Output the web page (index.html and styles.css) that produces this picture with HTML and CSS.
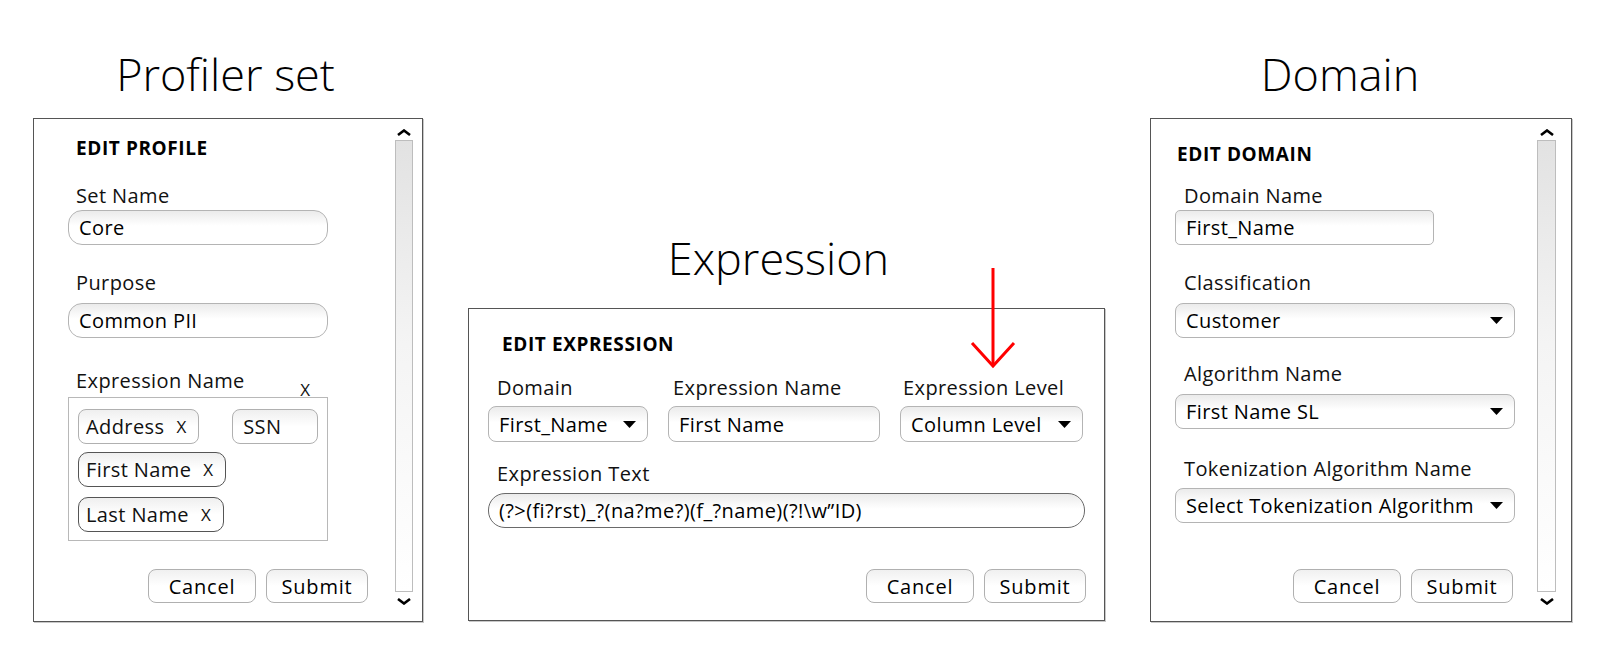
FILE: index.html
```html
<!DOCTYPE html>
<html lang="en">
<head>
<meta charset="utf-8">
<title>Edit forms</title>
<link rel="stylesheet" href="styles.css">
</head>
<body>
<main class="page">

  <section class="col col-profile">
    <h1 class="title title-profile">Profiler set</h1>
    <div class="panel panel-profile">
      <div class="panel-content">
        <h2 class="heading">EDIT PROFILE</h2>
        <div class="label p-setname">Set Name</div>
        <div class="input input-pill p-setname-in">Core</div>
        <div class="label p-purpose">Purpose</div>
        <div class="input input-pill p-purpose-in">Common PII</div>
        <div class="label-row p-exprname">
          <span class="label">Expression Name</span>
          <span class="label-x">X</span>
        </div>
        <div class="chip-box">
          <div class="chip-row">
            <span class="chip">Address <span class="chip-x">X</span></span>
            <span class="chip chip-input">SSN</span>
          </div>
          <div class="chip-row chip-row-2">
            <span class="chip chip-dark">First Name <span class="chip-x">X</span></span>
          </div>
          <div class="chip-row chip-row-3">
            <span class="chip chip-dark">Last Name <span class="chip-x">X</span></span>
          </div>
        </div>
        <div class="actions p-actions">
          <button class="btn btn-cancel">Cancel</button>
          <button class="btn btn-submit">Submit</button>
        </div>
      </div>
      <div class="scrollbar">
        <svg class="scroll-arrow" viewBox="0 0 16 7"><path d="M2 6 L8 1.5 L14 6" /></svg>
        <div class="scroll-track"></div>
        <svg class="scroll-arrow" viewBox="0 0 16 7"><path d="M2 1 L8 5.5 L14 1" /></svg>
      </div>
    </div>
  </section>

  <section class="col col-expr">
    <h1 class="title title-expr">Expression</h1>
    <svg class="red-arrow" width="46" height="104" viewBox="0 0 46 104">
      <path d="M23 2 L23 100" />
      <path d="M2 77 L23 100 L44 77" />
    </svg>
    <div class="panel panel-expr">
      <div class="panel-content">
        <h2 class="heading">EDIT EXPRESSION</h2>
        <div class="expr-grid">
          <div class="cell cell-domain">
            <div class="label">Domain</div>
            <div class="input select input-soft">First_Name
              <svg class="caret" viewBox="0 0 13 7"><path d="M0 0 H13 L6.5 7 Z"/></svg>
            </div>
          </div>
          <div class="cell cell-name">
            <div class="label">Expression Name</div>
            <div class="input input-soft">First Name</div>
          </div>
          <div class="cell cell-level">
            <div class="label">Expression Level</div>
            <div class="input select input-soft">Column Level
              <svg class="caret" viewBox="0 0 13 7"><path d="M0 0 H13 L6.5 7 Z"/></svg>
            </div>
          </div>
        </div>
        <div class="label e-text">Expression Text</div>
        <div class="input input-expr">(?&gt;(fi?rst)_?(na?me?)(f_?name)(?!\w”ID)</div>
        <div class="actions e-actions">
          <button class="btn btn-cancel">Cancel</button>
          <button class="btn btn-submit">Submit</button>
        </div>
      </div>
    </div>
  </section>

  <section class="col col-domain">
    <h1 class="title title-domain">Domain</h1>
    <div class="panel panel-domain">
      <div class="panel-content">
        <h2 class="heading">EDIT DOMAIN</h2>
        <div class="label d-name">Domain Name</div>
        <div class="input input-square d-name-in">First_Name</div>
        <div class="label d-class">Classification</div>
        <div class="input select input-soft d-class-in">Customer
          <svg class="caret" viewBox="0 0 13 7"><path d="M0 0 H13 L6.5 7 Z"/></svg>
        </div>
        <div class="label d-algo">Algorithm Name</div>
        <div class="input select input-soft d-algo-in">First Name SL
          <svg class="caret" viewBox="0 0 13 7"><path d="M0 0 H13 L6.5 7 Z"/></svg>
        </div>
        <div class="label d-token">Tokenization Algorithm Name</div>
        <div class="input select input-soft d-token-in">Select Tokenization Algorithm
          <svg class="caret" viewBox="0 0 13 7"><path d="M0 0 H13 L6.5 7 Z"/></svg>
        </div>
        <div class="actions d-actions">
          <button class="btn btn-cancel">Cancel</button>
          <button class="btn btn-submit">Submit</button>
        </div>
      </div>
      <div class="scrollbar scrollbar-domain">
        <svg class="scroll-arrow" viewBox="0 0 16 7"><path d="M2 6 L8 1.5 L14 6" /></svg>
        <div class="scroll-track"></div>
        <svg class="scroll-arrow" viewBox="0 0 16 7"><path d="M2 1 L8 5.5 L14 1" /></svg>
      </div>
    </div>
  </section>

</main>
</body>
</html>
```

FILE: styles.css
```css
* { box-sizing: border-box; }

html, body {
  margin: 0;
  background: #fff;
}

body {
  width: 1613px;
  height: 655px;
  overflow: hidden;
  font-family: "Open Sans", "Liberation Sans", sans-serif;
  color: #111;
}

.page {
  display: flex;
  align-items: flex-start;
  gap: 45px;
  padding-left: 33px;
}

.col {
  position: relative;
  display: flex;
  flex-direction: column;
}

.col-profile { width: 390px; padding-top: 52px; }
.col-expr { width: 637px; padding-top: 236px; }
.col-domain { width: 422px; padding-top: 52px; }

/* ---------- titles ---------- */
.title {
  margin: 0 0 22px;
  height: 44px;
  font-size: 45px;
  line-height: 44px;
  font-weight: 300;
  text-align: center;
  color: #000;
}
.title-profile { padding-right: 5px; }
.title-expr { padding-right: 16px; margin-bottom: 28px; }
.title-domain { padding-right: 42px; }

.red-arrow {
  position: absolute;
  left: 502px;
  top: 266px;
  fill: none;
  stroke: #ff0000;
  stroke-width: 3;
}

/* ---------- panels ---------- */
.panel {
  display: flex;
  border: 1px solid #555;
  box-shadow: 1px 1px 0 #c8c8c8;
  background: #fff;
}
.panel-profile { height: 504px; }
.panel-expr { height: 313px; }
.panel-domain { height: 504px; }

.panel-content {
  flex: 1;
  display: flex;
  flex-direction: column;
  align-items: flex-start;
}
.panel-profile .panel-content { padding: 19px 27px 0 34px; }
.panel-expr .panel-content { padding: 25px 18px 0 19px; }
.panel-domain .panel-content { padding: 25px 22px 0 24px; }

.heading {
  margin: 0;
  font-size: 19px;
  line-height: 20px;
  font-weight: 700;
  letter-spacing: 0.6px;
  color: #000;
}
.panel-profile .heading { padding-left: 8px; }
.panel-expr .heading { padding-left: 14px; }
.panel-domain .heading { padding-left: 2px; }

.label {
  font-size: 20px;
  line-height: 20px;
  letter-spacing: 0.4px;
  white-space: nowrap;
}
.panel-profile .label { padding-left: 8px; }
.panel-domain .label { padding-left: 9px; }

/* ---------- fields ---------- */
.input {
  display: flex;
  align-items: center;
  height: 35px;
  padding: 0 10px;
  font-size: 20px;
  letter-spacing: 0.4px;
  white-space: nowrap;
  border: 1px solid #b4b4b4;
  background: linear-gradient(#ebebeb, #fff 45%);
  color: #000;
}
.input-pill { width: 260px; border-radius: 14px; }
.input-square { width: 259px; border-radius: 5px; }
.input-soft { border-radius: 8px; }
.input-expr {
  width: 597px;
  margin-top: 9px;
  border-radius: 17px;
  border-color: #6a6a6a;
}

.select {
  justify-content: space-between;
  padding-right: 11px;
}
.caret {
  width: 13px;
  height: 7px;
  flex: none;
  fill: #000;
}

/* profile spacing */
.p-setname { margin-top: 28px; }
.p-setname-in { margin-top: 4px; }
.p-purpose { margin-top: 28px; }
.p-purpose-in { margin-top: 10px; }
.p-exprname { margin-top: 33px; }

.label-row {
  display: flex;
  align-items: flex-start;
  justify-content: space-between;
  width: 260px;
  height: 20px;
}
.label-x {
  font-size: 17px;
  line-height: 20px;
  margin: 9px 18px -9px 0;
}

.chip-box {
  width: 260px;
  height: 144px;
  margin-top: 6px;
  padding: 11px 0 0 9px;
  border: 1px solid #b8b8b8;
}
.chip-row { display: flex; gap: 33px; }
.chip-row-2 { margin-top: 8px; }
.chip-row-3 { margin-top: 10px; }

.chip {
  display: inline-flex;
  align-items: center;
  gap: 12px;
  height: 35px;
  padding: 0 12px 0 7px;
  font-size: 20px;
  letter-spacing: 0.4px;
  white-space: nowrap;
  border: 1px solid #b0b0b0;
  border-radius: 8px;
  background: linear-gradient(#efefef, #fff 50%);
}
.chip-dark { border-color: #555; border-radius: 10px; }
.chip-input { width: 86px; padding-left: 10px; }
.chip-x { font-size: 17px; letter-spacing: 0; }

/* expression spacing */
.expr-grid {
  display: grid;
  grid-template-columns: 160px 212px 183px;
  column-gap: 20px;
  margin-top: 24px;
}
.expr-grid .label { padding-left: 9px; }
.expr-grid .cell-name .label { padding-left: 5px; }
.expr-grid .cell-level .label { padding-left: 3px; }
.expr-grid .input { height: 36px; margin-top: 8px; }
.e-text { margin-top: 22px; padding-left: 9px; }

/* domain spacing */
.d-name { margin-top: 22px; }
.d-name-in { margin-top: 4px; }
.d-class { margin-top: 28px; }
.d-class-in { margin-top: 10px; }
.d-algo { margin-top: 26px; }
.d-algo-in { margin-top: 10px; }
.d-token { margin-top: 30px; }
.d-token-in { margin-top: 9px; }
.d-class-in, .d-algo-in, .d-token-in { width: 100%; }

/* ---------- buttons ---------- */
.actions {
  display: flex;
  gap: 10px;
  align-self: stretch;
  justify-content: flex-end;
}
.p-actions { margin-top: 28px; }
.e-actions { margin-top: 41px; }
.d-actions { margin-top: 46px; padding-right: 2px; }

.btn {
  height: 34px;
  padding: 0;
  font-family: inherit;
  font-size: 20px;
  letter-spacing: 0.8px;
  color: #000;
  border: 1px solid #b0b0b0;
  border-radius: 8px;
  background: linear-gradient(#f0f0f0, #fff 50%);
}
.btn-cancel { width: 108px; }
.btn-submit { width: 102px; }

/* ---------- scrollbar ---------- */
.scrollbar {
  width: 18px;
  margin: 10px 9px 16px 0;
  display: flex;
  flex-direction: column;
  align-items: center;
}
.scrollbar-domain { width: 19px; margin-right: 15px; }
.scroll-arrow {
  width: 16px;
  height: 7px;
  flex: none;
  fill: none;
  stroke: #000;
  stroke-width: 2.6;
}
.scroll-track {
  flex: 1;
  width: 100%;
  margin: 4px 0 6px;
  border: 1px solid #bdbdbd;
  background: linear-gradient(#e2e2e2, #f4f4f4 45%, #fff);
}
```
